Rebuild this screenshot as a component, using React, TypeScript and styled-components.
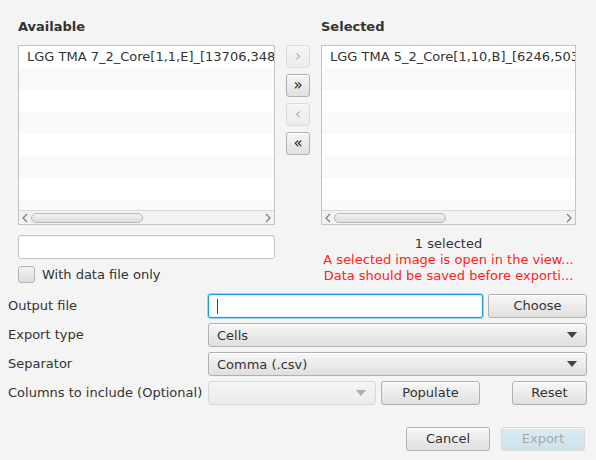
import styled, { createGlobalStyle } from 'styled-components'

const GlobalStyle = createGlobalStyle`
  html, body {
    margin: 0;
    padding: 0;
    background: #f4f4f4;
  }
  body {
    font-family: 'DejaVu Sans', 'Liberation Sans', sans-serif;
    font-size: 13px;
    color: #333;
  }
  * { box-sizing: border-box; }
`

const availableItems = ['LGG TMA 7_2_Core[1,1,E]_[13706,34812]']
const selectedItems = ['LGG TMA 5_2_Core[1,10,B]_[6246,50312]']

function Chevron({ left }: { left?: boolean }) {
  return (
    <svg width="8" height="10" viewBox="0 0 8 10">
      <path
        d={left ? 'M6 1 L2 5 L6 9' : 'M2 1 L6 5 L2 9'}
        fill="none"
        stroke="#7a7a7a"
        strokeWidth="1.2"
      />
    </svg>
  )
}

function ItemList({ items }: { items: string[] }) {
  const rows = Array.from({ length: 8 }, (_, i) => items[i] ?? '')
  return (
    <ListBox>
      <Rows>
        {rows.map((r, i) => (
          <Row key={i} $odd={i % 2 === 1}>{r}</Row>
        ))}
      </Rows>
      <HScroll>
        <Arrow><Chevron left /></Arrow>
        <Track>
          <Thumb />
        </Track>
        <Arrow><Chevron /></Arrow>
      </HScroll>
    </ListBox>
  )
}

export default function App() {
  return (
    <>
      <GlobalStyle />
      <Page>
        <Chooser>
          <Column>
            <Heading>Available</Heading>
            <ItemList items={availableItems} />
            <Field />
            <CheckRow>
              <CheckBox />
              <span>With data file only</span>
            </CheckRow>
          </Column>
          <MoveColumn>
            <MoveButton $disabled>›</MoveButton>
            <MoveButton>»</MoveButton>
            <MoveButton $disabled>‹</MoveButton>
            <MoveButton>«</MoveButton>
          </MoveColumn>
          <Column>
            <Heading>Selected</Heading>
            <ItemList items={selectedItems} />
            <Status>
              <div>1 selected</div>
              <Warning>A selected image is open in the view...</Warning>
              <Warning>Data should be saved before exporti...</Warning>
            </Status>
          </Column>
        </Chooser>

        <Form>
          <Label>Output file</Label>
          <Line>
            <Field $focused $grow>
              <Caret />
            </Field>
            <Button $w={99}>Choose</Button>
          </Line>

          <Label>Export type</Label>
          <Combo>
            <span>Cells</span>
            <DropArrow />
          </Combo>

          <Label>Separator</Label>
          <Combo>
            <span>Comma (.csv)</span>
            <DropArrow />
          </Combo>

          <Label>Columns to include (Optional)</Label>
          <Line>
            <Combo $disabled $w={168}>
              <span />
              <DropArrow />
            </Combo>
            <Button $w={99}>Populate</Button>
            <Spacer />
            <Button $w={75}>Reset</Button>
          </Line>
        </Form>

        <Footer>
          <Button $w={84}>Cancel</Button>
          <Button $w={84} $default $disabled>Export</Button>
        </Footer>
      </Page>
    </>
  )
}

const Page = styled.div`
  width: 596px;
  height: 460px;
  padding: 19px 9px 0 8px;
`

const Chooser = styled.div`
  display: grid;
  grid-template-columns: 257px 24px 255px;
  column-gap: 11px;
  padding-left: 10px;
`

const Column = styled.div`
  display: flex;
  flex-direction: column;
`

const Heading = styled.div`
  font-weight: bold;
  line-height: 16px;
  height: 16px;
  margin-bottom: 10px;
`

const ListBox = styled.div`
  height: 180px;
  border: 1px solid #c4c4c4;
  background: #fff;
  display: flex;
  flex-direction: column;
  overflow: hidden;
`

const Rows = styled.div`
  flex: 1;
  overflow: hidden;
`

const Row = styled.div<{ $odd?: boolean }>`
  height: 22px;
  line-height: 22px;
  padding-left: 8px;
  white-space: nowrap;
  overflow: hidden;
  background: ${p => (p.$odd ? '#f9f9f9' : '#fff')};
`

const HScroll = styled.div`
  height: 14px;
  flex: none;
  display: flex;
  align-items: center;
  background: #f2f2f2;
  border-top: 1px solid #d8d8d8;
`

const Arrow = styled.div`
  width: 12px;
  height: 13px;
  display: flex;
  align-items: center;
  justify-content: center;
`

const Track = styled.div`
  flex: 1;
  height: 13px;
  display: flex;
  align-items: center;
`

const Thumb = styled.div`
  width: 112px;
  height: 10px;
  border: 1px solid #b8b8b8;
  border-radius: 5px;
  background: linear-gradient(#f2f2f2, #dedede);
`

const MoveColumn = styled.div`
  display: flex;
  flex-direction: column;
  gap: 6px;
  padding-top: 26px;
`

const MoveButton = styled.div<{ $disabled?: boolean }>`
  width: 24px;
  height: 23px;
  border: 1px solid #b0b0b0;
  border-radius: 3px;
  background: linear-gradient(#f7f7f7, #dfdfdf);
  box-shadow: inset 0 1px 0 #fff;
  text-align: center;
  line-height: 20px;
  font-size: 15px;
  color: #1a1a1a;
  opacity: ${p => (p.$disabled ? 0.35 : 1)};
`

const Field = styled.div<{ $focused?: boolean; $grow?: boolean }>`
  height: 24px;
  ${p => (p.$grow ? 'flex: 1;' : 'margin-top: 10px;')}
  background: #fff;
  border: 1px solid ${p => (p.$focused ? '#1a9bd4' : '#c6c6c6')};
  border-radius: 3px;
  box-shadow: ${p => (p.$focused ? '0 0 0 1px #9fd3ec, inset 0 0 0 1px #e3f3fb' : 'inset 0 1px 1px #eee')};
  display: flex;
  align-items: center;
  padding-left: 8px;
`

const Caret = styled.div`
  width: 1px;
  height: 15px;
  background: #444;
`

const CheckRow = styled.div`
  display: flex;
  align-items: center;
  gap: 7px;
  margin-top: 7px;
  height: 17px;
`

const CheckBox = styled.div`
  width: 17px;
  height: 17px;
  border: 1px solid #b4b4b4;
  border-radius: 3px;
  background: linear-gradient(#f4f4f4, #dcdcdc);
`

const Status = styled.div`
  margin-top: 11px;
  text-align: center;
  line-height: 16px;
  white-space: nowrap;
`

const Warning = styled.div`
  color: #ff2222;
  line-height: 16px;
`

const Form = styled.div`
  margin-top: 10px;
  display: grid;
  grid-template-columns: 200px 379px;
  grid-auto-rows: 24px;
  row-gap: 5px;
  align-items: center;
`

const Label = styled.div`
  line-height: 24px;
  white-space: nowrap;
`

const Line = styled.div`
  display: flex;
  align-items: center;
  gap: 5px;
  height: 24px;
`

const Spacer = styled.div`
  flex: 1;
`

const Button = styled.div<{ $w?: number; $default?: boolean; $disabled?: boolean }>`
  width: ${p => p.$w ?? 80}px;
  height: 24px;
  flex: none;
  border: 1px solid #b0b0b0;
  border-radius: 3px;
  background: ${p => (p.$default ? 'linear-gradient(#b8dff3, #93c9e6)' : 'linear-gradient(#f7f7f7, #dfdfdf)')};
  box-shadow: inset 0 1px 0 #fff;
  text-align: center;
  line-height: 22px;
  color: #333;
  opacity: ${p => (p.$disabled ? 0.4 : 1)};
`

const Combo = styled.div<{ $w?: number; $disabled?: boolean }>`
  ${p => (p.$w ? `width: ${p.$w}px; flex: none;` : '')}
  height: 24px;
  border: 1px solid #b0b0b0;
  border-radius: 3px;
  background: linear-gradient(#f7f7f7, #dfdfdf);
  box-shadow: inset 0 1px 0 #fff;
  display: flex;
  align-items: center;
  justify-content: space-between;
  padding: 0 8px 0 8px;
  color: #333;
  opacity: ${p => (p.$disabled ? 0.4 : 1)};
`

const DropArrow = styled.div`
  width: 0;
  height: 0;
  border-left: 5px solid transparent;
  border-right: 5px solid transparent;
  border-top: 6px solid #444;
  margin-right: 1px;
`

const Footer = styled.div`
  display: flex;
  justify-content: flex-end;
  gap: 11px;
  margin-top: 22px;
  padding-right: 2px;
`
